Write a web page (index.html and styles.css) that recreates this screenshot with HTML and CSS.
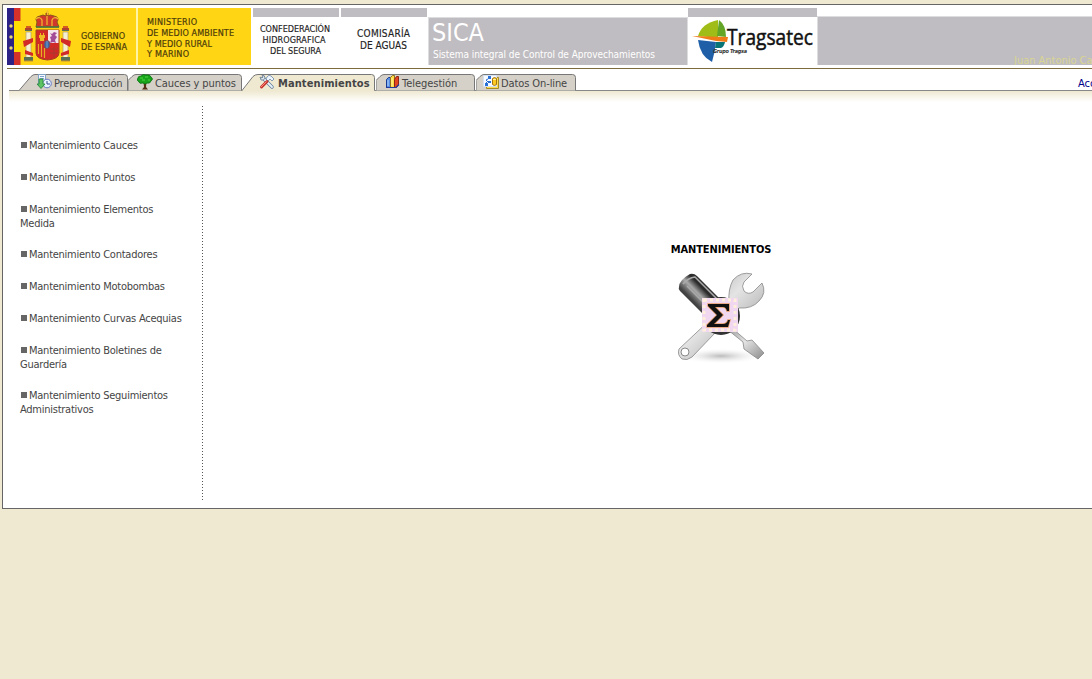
FILE: index.html
```html
<!DOCTYPE html>
<html lang="es">
<head>
<meta charset="utf-8">
<title>SICA - Mantenimientos</title>
<link rel="stylesheet" href="styles.css">
</head>
<body>
<div class="page">
  <header class="banner">
    <svg class="banner-art" width="1229" height="57" viewBox="7 8 1229 57">
      <rect x="7" y="8" width="245" height="57" fill="#fff"/>
      <!-- Spanish government -->
      <rect x="7" y="8" width="244" height="57" fill="#ffd514"/>
      <rect x="7" y="8" width="7" height="57" fill="#2d2384"/>
      <rect x="14" y="8" width="6.500" height="57" fill="#ffdf00"/>
      <rect x="14" y="8" width="6.500" height="13" fill="#d3312a"/>
      <rect x="14" y="52" width="6.500" height="13" fill="#d3312a"/>
      <g fill="#e8d676"><circle cx="11" cy="26" r="1.700"/><circle cx="11" cy="37" r="1.700"/><circle cx="11" cy="48" r="1.700"/></g>
      <rect x="136" y="8" width="2" height="57" fill="#fff3a4"/>
      <g class="arms">
        <path d="M36 27h23l-2-5q3-5-3-6-4-2-6 0v-3h-2v3q-3-2-6 0-6 1-3 6z" fill="#cf382b" stroke="#8c5a1a" stroke-width="1"/>
        <path d="M36 19q4-3 6 1v6M47 16v9M58 19q-4-3-6 1v6M46 12h3M47.500 10v5" fill="none" stroke="#f2bd30" stroke-width="1.200"/>
        <path d="M36 27h23" stroke="#3f7a45" stroke-width="1.500"/>
        <path d="M36 30h23v23q0 6-11.500 7Q36 59 36 53z" fill="#d22a26" stroke="#a3451d"/>
        <path d="M48 30h10.500v13H48z" fill="#f4e6ea"/>
        <path d="M50 33l2 1 2-2 3 1-2 2 2 2-2 3 1 3-3-1-3 1 1-3-1-3 2-1z" fill="#a34b97"/>
        <path d="M39 38v-3h1v-2h1v2h2v-2h1v2h1v3h-1v3h-4v-3z" fill="#efbb25"/>
        <path d="M38.500 44v10M41.500 44v13M44.500 48v10" stroke="#e5b022" stroke-width="1.200"/>
        <path d="M50 49h8M50 53h8M54 46v11" stroke="#a83a30" stroke-width="1"/>
        <ellipse cx="47" cy="44.500" rx="3" ry="4" fill="#3e65a6" stroke="#8c4a51"/>
        <path d="M47 41v7" stroke="#89b4cf" stroke-width=".8"/>
        <g><path d="M26 32h5v26h-5z" fill="#f6efd2" stroke="#b6a06a" stroke-width=".7"/><path d="M25 31v-3h7v3zM24 57h9v4h-9z" fill="#5a7053"/><path d="M25 29h7M26 27h5" stroke="#c73324" stroke-width="1.500"/><path d="M23 41l10-3v4l-9 5zM25 50l8 3v3l-8-2z" fill="#d22a26"/><path d="M24 61h9" stroke="#c99430"/></g>
        <g transform="translate(94 0) scale(-1 1)"><path d="M26 32h5v26h-5z" fill="#f6efd2" stroke="#b6a06a" stroke-width=".7"/><path d="M25 31v-3h7v3zM24 57h9v4h-9z" fill="#5a7053"/><path d="M25 29h7M26 27h5" stroke="#c73324" stroke-width="1.500"/><path d="M23 41l10-3v4l-9 5zM25 50l8 3v3l-8-2z" fill="#d22a26"/><path d="M24 61h9" stroke="#c99430"/></g>
      </g>
      <g class="gov-text">
        <text x="81" y="39" textLength="44">GOBIERNO</text>
        <text x="81" y="50" textLength="46">DE ESPAÑA</text>
        <text x="147" y="24.500" textLength="50">MINISTERIO</text>
        <text x="147" y="35.500" textLength="87">DE MEDIO AMBIENTE</text>
        <text x="147" y="46.500" textLength="65">Y MEDIO RURAL</text>
        <text x="147" y="57" textLength="42">Y MARINO</text>
      </g>
      <!-- organisation -->
      <g fill="#bfbdc1"><rect x="253" y="8" width="86" height="9"/><rect x="341" y="8" width="86" height="9"/></g>
      <g class="org-text">
        <text x="260" y="32" textLength="70">CONFEDERACIÓN</text>
        <text x="262.500" y="43" textLength="63">HIDROGRAFICA</text>
        <text x="270" y="53.500" textLength="51">DEL SEGURA</text>
        <text x="357" y="37" textLength="53" class="org-big">COMISARÍA</text>
        <text x="360" y="49" textLength="47" class="org-big">DE AGUAS</text>
      </g>
      <!-- application name -->
      <rect x="428" y="17" width="260" height="48" fill="#dddcde"/>
      <rect x="429" y="18" width="258" height="47" fill="#bfbdc1"/>
      <text x="432" y="41" textLength="52" lengthAdjust="spacingAndGlyphs" class="app-name">SICA</text>
      <text x="433" y="58" textLength="222" class="app-sub">Sistema integral de Control de Aprovechamientos</text>
      <!-- Tragsatec -->
      <rect x="688" y="8" width="129" height="9" fill="#bfbdc1"/>
      <path d="M698 36Q702 23 718 20v18z" fill="#9fbd16"/>
      <path d="M719 20q7 5 7 17l-9-1z" fill="#62a527"/>
      <path d="M698 40l18 2q-1 10-4 20-12-6-14-22z" fill="#1f5fa8"/>
      <path d="M716 42h9q-1 5-4 6h-6z" fill="#087476"/>
      <path d="M692 36l36 1-1 5-11-1z" fill="#ef7c18"/>
      <text x="727" y="45" textLength="86" lengthAdjust="spacingAndGlyphs" class="brand">Tragsatec</text>
      <text x="713" y="53" textLength="34" class="brand-sub">Grupo Tragsa</text>
      <!-- user strip -->
      <rect x="817" y="16" width="419" height="49" fill="#dddcde"/>
      <rect x="818" y="17" width="418" height="48" fill="#bfbdc1"/>
      <text x="1014" y="64" class="user" textLength="109">Juan Antonio Carrasco</text>
    </svg>
  </header>

  <nav class="tabs">
    <a class="tab tab-pre">
      <svg class="tab-bg" width="110" height="17"><path d="M0 16.500L12 2.500Q14 .5 16 .5H105.500Q108.500 .5 108.500 3.500V16.500"/></svg>
      <svg class="icon" width="16" height="16"><path d="M2.500 .5h7v9h-7z" fill="#f5f9fd" stroke="#82a3c4"/><path d="M4 2.500h4M4 4.500h4" stroke="#7fa3ce"/><circle cx="11" cy="9.500" r="4.300" fill="#e8f3ff" stroke="#6478c3"/><path d="M11 7v3h3" stroke="#334f91" fill="none"/><path d="M3 5h4v5h2l-4 4.500L1 10h2z" fill="#5cc263" stroke="#218336" stroke-width=".8"/></svg>
      <span class="label">Preproducción</span>
    </a>
    <a class="tab tab-cauces">
      <svg class="tab-bg" width="115" height="17"><path d="M0 16.500V6.500L4 2.500Q6 .5 8 .5H110.500Q113.500 .5 113.500 3.500V16.500"/></svg>
      <svg class="icon" width="16" height="16"><path d="M6.500 8h3l-.5 5 2 2.500H5L7 13z" fill="#563116"/><path d="M2 8Q-1 6 1 4q0-2 3-2 2-2.500 5-1 4-1 5 2 3 2 0 4-1 3-4 2-2 2-4 0-4 1-4-1z" fill="#18a51c" stroke="#087010" stroke-width=".8"/><path d="M3 4h3M8 3h3M5 6h3M11 6h2" stroke="#51d642" stroke-width="1.200"/></svg>
      <span class="label">Cauces y puntos</span>
    </a>
    <a class="tab tab-mant active">
      <svg class="tab-bg" width="133" height="17"><path class="fill" d="M0 17L11 2.500Q13 .5 16 .5H129.500Q132.500 .5 132.500 3.500V17z"/><path class="edge" d="M0 16.500L11 2.500Q13 .5 16 .5H129.500Q132.500 .5 132.500 3.500V16.500"/></svg>
      <svg class="icon" width="16" height="16"><path d="M4 4l9 9" stroke="#66809c" stroke-width="3.500" stroke-linecap="round"/><path d="M4 4l9 9" stroke="#e8f2fb" stroke-width="1.800" stroke-linecap="round"/><path d="M1 3l2 1 1-1-1-2q3 0 3 3-1 3-4 2z" fill="#dce6f0" stroke="#66788b" stroke-width=".8"/><path d="M8 3q2-3 4-1l3 3-2 2-2-2-2 2-2-2z" fill="#eef4fb" stroke="#6b86a6" stroke-width=".8"/><path d="M8 7.500L2.500 13" stroke="#c53731" stroke-width="3" stroke-linecap="round"/><path d="M7.500 7.500L2 13" stroke="#ff8a79"/></svg>
      <span class="label">Mantenimientos</span>
    </a>
    <a class="tab tab-tele">
      <svg class="tab-bg" width="100" height="17"><path d="M0 16.500V6.500L4 2.500Q6 .5 8 .5H95.500Q98.500 .5 98.500 3.500V16.500"/></svg>
      <svg class="icon" width="16" height="16"><path d="M1.500 5.500l2-2h2v10h-4z" fill="#568ee6" stroke="#193c91"/><path d="M5.500 3.500l2-2h2v12h-4z" fill="#ffdc43" stroke="#94711a"/><path d="M9.500 5.500l2-3h2v8l-2 3h-2z" fill="#e34620" stroke="#8e2414"/><path d="M1 13.500h10l3-3" stroke="#253c9d" stroke-width="1.200" fill="none"/><path d="M3 6v6" stroke="#b7d7ff"/><path d="M7 4v8" stroke="#fff4a7"/></svg>
      <span class="label">Telegestión</span>
    </a>
    <a class="tab tab-datos">
      <svg class="tab-bg" width="101" height="17"><path d="M0 16.500V6.500L4 2.500Q6 .5 8 .5H96.500Q99.500 .5 99.500 3.500V16.500"/></svg>
      <svg class="icon" width="16" height="16"><path d="M3.500 3.500h12v11h-12z" fill="#ffdd4c" stroke="#a68b24"/><path d="M.5 1.500h13v11H.5z" fill="#f7fbff" stroke="#d3e1f2"/><path d="M5 2h3v3H5zM2 9h3v3H2zM5 7h3v2H5z" fill="#286fd6"/><path d="M5 7L3 9M5 5l-2 1 2 2" stroke="#286fd6" fill="none"/><path d="M9.500 4.500q2-2 4 0v6q-2 2-4 0z" fill="#ffc924" stroke="#a37412"/><path d="M10 5.500h3" stroke="#fff3a3"/></svg>
      <span class="label">Datos On-line</span>
    </a>
    <a class="access">Accesos</a>
  </nav>
  <div class="shade"></div>

  <div class="content">
    <ul class="menu">
      <li><i class="bullet"></i>Mantenimiento Cauces</li>
      <li><i class="bullet"></i>Mantenimiento Puntos</li>
      <li><i class="bullet"></i>Mantenimiento Elementos<br>Medida</li>
      <li><i class="bullet"></i>Mantenimiento Contadores</li>
      <li><i class="bullet"></i>Mantenimiento Motobombas</li>
      <li><i class="bullet"></i>Mantenimiento Curvas Acequias</li>
      <li><i class="bullet"></i>Mantenimiento Boletines de<br>Guardería</li>
      <li><i class="bullet"></i>Mantenimiento Seguimientos<br>Administrativos</li>
    </ul>
    <main class="main">
      <h1>MANTENIMIENTOS</h1>
      <svg class="tools" width="100" height="100" viewBox="671 266 100 100">
        <defs>
          <linearGradient id="dark" x1="0" y1="1" x2="1" y2="0"><stop offset="0" stop-color="#222"/><stop offset=".35" stop-color="#444"/><stop offset=".5" stop-color="#aaa"/><stop offset=".62" stop-color="#2a2a2a"/><stop offset="1" stop-color="#555"/></linearGradient>
          <linearGradient id="steel" x1="0" y1="0" x2="1" y2="1"><stop offset="0" stop-color="#999"/><stop offset=".45" stop-color="#e4e4e4"/><stop offset="1" stop-color="#8a8a8a"/></linearGradient>
          <radialGradient id="ground"><stop offset="0" stop-color="#bbb"/><stop offset="1" stop-color="#fff" stop-opacity="0"/></radialGradient>
        </defs>
        <ellipse cx="721" cy="356" rx="44" ry="8" fill="url(#ground)"/>
        <path d="M679 349L729 302q-1-13 4-22 8-9 19-6l-8 8q-3 4 0 9 4 4 9 1l9-9q5 10-3 18-7 8-20 7L692 357q-5 4-10 2-5-4-3-10z" fill="url(#steel)" stroke="#888" stroke-width=".8"/>
        <circle cx="685" cy="352" r="4" fill="#fff" stroke="#888"/>
        <path d="M732 328l15 13 5-1 12 13-6 6-14-10-1-7-15-12z" fill="url(#steel)" stroke="#888" stroke-width=".8"/>
        <path d="M679 287q0-7 11-13 4-1 7 2l22 22-15 17-24-24q-2-2-1-4z" fill="url(#dark)"/>
        <circle cx="721" cy="316" r="19" fill="#333"/>
        <path d="M683 284q5-6 12-7l22 22M687 286l20 20" fill="none" stroke="#aaa" stroke-width="1.500"/>
        <rect x="702" y="298" width="36" height="34" fill="#f1d8f0"/>
        <path d="M704 300h31v30h-31z" fill="none" stroke="#fff0dc" stroke-width="3" stroke-dasharray="3 3"/>
        <path d="M708 304h21v7h-2q-1-4-4-4h-8l8 8-9 9h9q4 0 5-4h2l-2 7h-21v-2l10-10-9-9z" fill="#111" stroke="#e79b61" stroke-width="1.500" paint-order="stroke"/>
      </svg>
    </main>
  </div>
</div>
</body>
</html>
```
FILE: styles.css
```css
body {
  margin: 0;
  height: 679px;
  padding: 4px 0 0 2px;
  box-sizing: border-box;
  background: #efe9d2;
  overflow: hidden;
  font-family: "DejaVu Sans Condensed", "DejaVu Sans", sans-serif;
  font-stretch: condensed;
  font-size: 11px;
  color: #454545;
}
.page {
  box-sizing: border-box;
  width: 1240px;
  height: 505px;
  border: 1px solid #666;
  background: #fff;
}
.banner {
  height: 60px;
  margin-left: 4px;
  padding-top: 3px;
  border-bottom: 1px solid #7b6b3d;
}
.banner-art { display: block; }
.gov-text { font-size: 9px; fill: #4c3c0b; stroke: #4c3c0b; stroke-width: .2px; }
.org-text { font-size: 9px; fill: #222; stroke: #222; stroke-width: .15px; }
.org-text .org-big { font-size: 10px; }
.app-name { font-size: 24px; fill: #fff; }
.app-sub { font-size: 10px; fill: #fff; }
.brand { font-family: "Open Sans", sans-serif; font-stretch: normal; font-size: 22px; fill: #111; stroke: #111; stroke-width: .5px; }
.brand-sub { font-size: 5.500px; font-weight: bold; font-style: italic; fill: #333; }
.user { font-size: 11px; fill: #d9d593; }

.tabs {
  display: flex;
  height: 16px;
  margin-left: 6px;
  padding-top: 5px;
  border-bottom: 1px solid #888;
}
.tab {
  position: relative;
  display: flex;
  flex: none;
  box-sizing: border-box;
  height: 17px;
}
.tab-bg { position: absolute; left: 0; top: 0; }
.tab-bg path { fill: #d5d1c8; stroke: #777; }
.active .tab-bg .fill { fill: #efe9d2; stroke: none; }
.active .tab-bg .edge { fill: none; }
.tab .icon, .tab .label { position: relative; flex: none; }
.label { margin-left: 2px; padding-top: 1px; line-height: 18px; white-space: nowrap; }
.tab-pre { width: 109px; margin-left: 10px; padding-left: 17px; }
.tab-pre .label { letter-spacing: -.15px; }
.tab-cauces { width: 114px; padding-left: 9px; }
.tab-cauces .label { letter-spacing: -.08px; }
.tab-mant { width: 134px; padding-left: 17px; }
.tab-mant .label { margin-left: 3px; font-weight: bold; letter-spacing: .1px; }
.tab-tele { width: 100px; padding-left: 9px; }
.tab-tele .label { margin-left: 1px; letter-spacing: -.03px; }
.tab-datos { width: 101px; padding-left: 7px; }
.tab-datos .label { letter-spacing: -.1px; }
.access { margin-left: 501px; padding-top: 1px; line-height: 18px; color: #00008b; }
.shade { height: 11px; margin-left: 6px; background: linear-gradient(#efe9d2, #fff); }

.content { display: flex; padding-top: 4px; }
.menu {
  box-sizing: border-box;
  width: 200px;
  height: 395px;
  margin: 0;
  padding: 33px 0 0 17px;
  list-style: none;
  line-height: 14px;
  letter-spacing: -.25px;
  background: repeating-linear-gradient(#555 0 1px, transparent 1px 3px) right top / 1px 100% no-repeat;
}
.menu li { margin-bottom: 18px; }
.menu li:has(br) { margin-bottom: 17px; }
.bullet { display: inline-block; width: 6px; height: 6px; margin: 0 2px 1px 1px; background: #666; }
.main { display: flex; flex: 1; flex-direction: column; align-items: center; padding: 137px 2px 0 0; }
h1 { margin: 0; font-size: 11px; line-height: 14px; letter-spacing: -.12px; color: #000; }
.tools { margin-top: 9px; }
```
